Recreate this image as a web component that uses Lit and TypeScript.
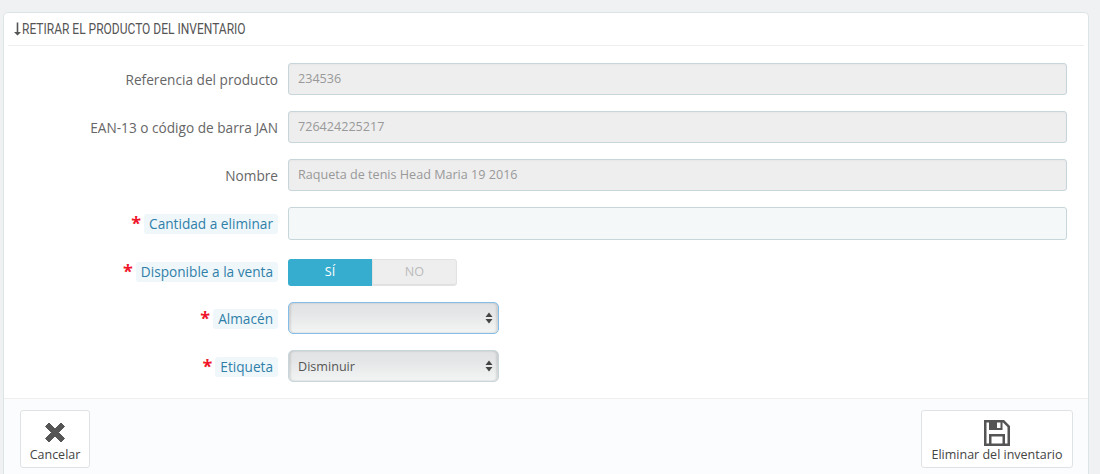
import { LitElement, html, css } from "lit";
import { customElement } from "lit/decorators.js";

@customElement("app-root")
export class AppRoot extends LitElement {
  static styles = css`
    :host { display: block; width: 1100px; height: 474px; overflow: hidden; background: #eff1f2; font-family: "Open Sans", sans-serif; font-size: 13px; color: #555; }
    .wrap { padding: 12px 11px 0 3px; }
    .panel { background: #fff; border: 1px solid #dce5e6; border-bottom: none; border-radius: 5px 5px 0 0; height: 470px; box-sizing: border-box; }
    .head { margin: 0 4px; height: 32px; border-bottom: 1px solid #eeeeee; display: flex; align-items: center; gap: 1px; padding: 0 0 0 6px; font-family: "Roboto", sans-serif; font-size: 15px; color: #555; white-space: nowrap; }
    .head span { display: inline-block; transform: scaleX(0.8); transform-origin: left center; }
    .head svg { display: block; flex: none; }
    .form { display: grid; grid-template-columns: 284px 779px; padding: 17px 0 0 0; height: 353px; box-sizing: border-box; border-bottom: 1px solid #eeeeee; align-content: start; }
    .lab { display: flex; justify-content: flex-end; align-items: center; gap: 3px; padding-right: 10px; height: 32px; margin-bottom: 16px; color: #666; white-space: nowrap; font-size: 13.65px; }
    .lab.req { padding-top: 1px; height: 31px; }
    .lab.short, .ctl.short { margin-bottom: 15px; }
    .ctl { height: 32px; margin-bottom: 16px; }
    .star { color: #f0152a; font-size: 18px; font-weight: 700; line-height: 18px; margin-top: -1px; }
    .hint { color: #2f7fa8; background: #eff7fb; border-radius: 3px; padding: 0 5px; height: 20px; line-height: 20px; }
    .input { height: 32px; box-sizing: border-box; border: 1px solid #c7d6db; border-radius: 3px; padding: 0 9px; line-height: 30px; font-size: 12.6px; }
    .ro { background: #eeeeee; color: #999; box-shadow: inset 0 1px 2px rgba(0,0,0,.03); }
    .empty { background: #f5f8f9; height: 33px; }
    .sw { display: flex; width: 169px; height: 27px; margin-top: 4px; border-radius: 3px; font-size: 12.6px; text-align: center; line-height: 26px; }
    .si { width: 84px; background: #36acce; color: #fff; border-radius: 3px 0 0 3px; }
    .no { width: 85px; box-sizing: border-box; background: #eeeeee; border: 1px solid #e2e2e2; color: #bbb; border-radius: 0 3px 3px 0; line-height: 24px; box-shadow: inset 0 -1px 1px rgba(0,0,0,.06); }
    .sel { width: 211px; height: 32px; box-sizing: border-box; border: 1px solid #c7d6db; border-radius: 5px; background: linear-gradient(#e0e2e3, #e4e6e7 35%, #f3f5f5); box-shadow: inset 2px 0 2px rgba(0,0,0,.1), inset -2px 0 2px rgba(0,0,0,.1); display: flex; align-items: center; justify-content: space-between; padding: 0 5px 0 9px; color: #555; font-size: 12.6px; }
    .focus { border-color: #84bde8; }
    .foot { background: #fbfcfd; display: flex; justify-content: space-between; padding: 11px 15px 0 16px; height: 84px; box-sizing: border-box; }
    .btn { height: 58px; box-sizing: border-box; background: #fff; border: 1px solid #dfe3e5; border-radius: 3px; display: flex; flex-direction: column; align-items: center; padding-top: 7px; color: #444; font-size: 12.5px; }
    .btn svg { display: block; height: 28px; }
    .btn div { line-height: 18px; white-space: nowrap; }
    .cancel { width: 70px; }
    .save { width: 152px; }
  `;

  private arrows() {
    return html`<svg width="8" height="12" viewBox="0 0 8 12"><path d="M4 0.500L7.500 5H.5z M4 11.500L7.500 7H.5z" fill="#444"/></svg>`;
  }

  private label(t: string, req = false, short = false) {
    return req
      ? html`<div class="lab req ${short ? "short" : ""}"><span class="star">*</span><span class="hint">${t}</span></div>`
      : html`<div class="lab">${t}</div>`;
  }

  render() {
    return html`<div class="wrap"><div class="panel">
      <div class="head">
        <svg width="7" height="14" viewBox="0 0 7 14"><path d="M2.700 0.500h1.600v9.500H7L3.500 13.500 0 10h2.700z" fill="#555"/></svg>
        <span>RETIRAR EL PRODUCTO DEL INVENTARIO</span>
      </div>
      <div class="form">
        ${this.label("Referencia del producto")}<div class="ctl"><div class="input ro">234536</div></div>
        ${this.label("EAN-13 o código de barra JAN")}<div class="ctl"><div class="input ro">726424225217</div></div>
        ${this.label("Nombre")}<div class="ctl"><div class="input ro">Raqueta de tenis Head Maria 19 2016</div></div>
        ${this.label("Cantidad a eliminar", true)}<div class="ctl"><div class="input empty"></div></div>
        ${this.label("Disponible a la venta", true, true)}<div class="ctl short"><div class="sw"><div class="si">SÍ</div><div class="no">NO</div></div></div>
        ${this.label("Almacén", true)}<div class="ctl"><div class="sel focus"><span></span>${this.arrows()}</div></div>
        ${this.label("Etiqueta", true)}<div class="ctl"><div class="sel"><span>Disminuir</span>${this.arrows()}</div></div>
      </div>
      <div class="foot">
        <div class="btn cancel">
          <svg width="22" height="28" viewBox="0 0 22 28"><path d="M1.500 8.500L5 5l6 6 6-6 3.500 3.500-6 6 6 6L17 24l-6-6-6 6-3.500-3.500 6-6z" fill="#555" stroke="#555" stroke-linejoin="round"/></svg>
          <div>Cancelar</div>
        </div>
        <div class="btn save">
          <svg width="26" height="28" viewBox="0 0 26 28"><path fill-rule="evenodd" fill="#555" d="M0 2h20l6 6v20H0z M2.500 4.500v21h2.500V16h16v9.500h2.500V9l-4.500-4.500h-.5V12H5V4.500z M7.500 18.500v7h11v-7z M13 4.500h3.500V10H13z"/></svg>
          <div>Eliminar del inventario</div>
        </div>
      </div>
    </div></div>`;
  }
}
